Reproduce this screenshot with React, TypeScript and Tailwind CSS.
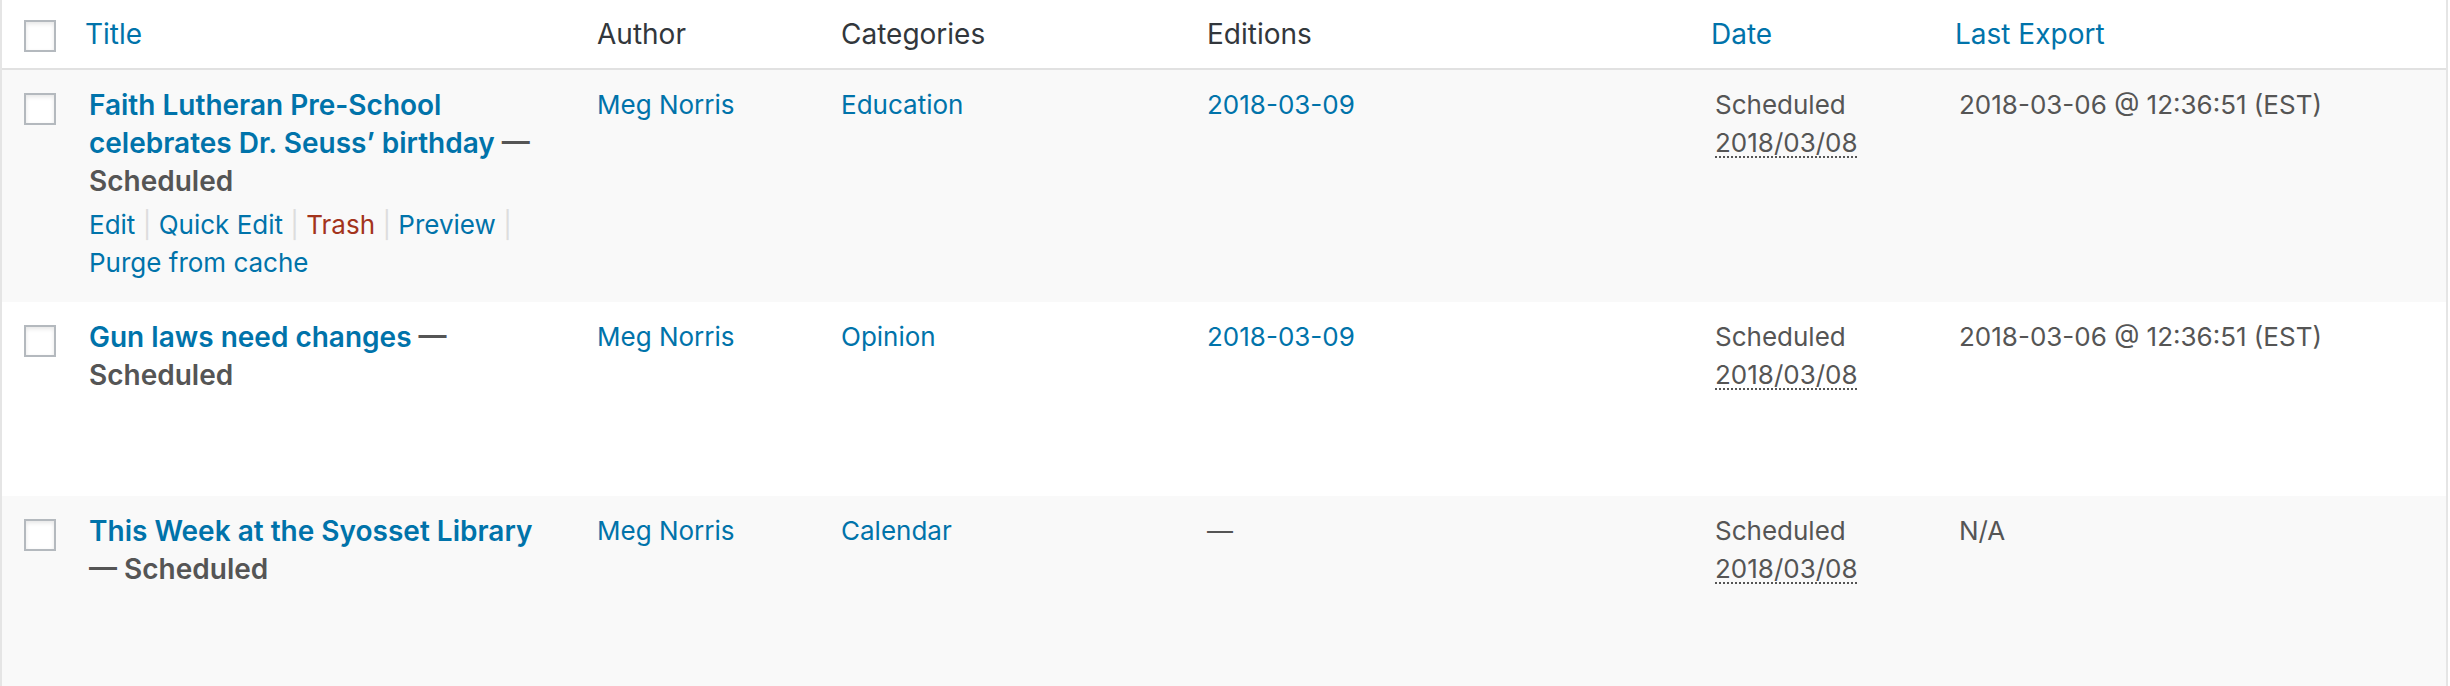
import * as React from "react";

type Post = {
  title: string;
  author: string;
  category: string;
  edition: string;
  date: string;
  lastExport: string;
  showActions?: boolean;
};

const posts: Post[] = [
  {
    title: "Faith Lutheran Pre-School celebrates Dr. Seuss\u2019 birthday",
    author: "Meg Norris",
    category: "Education",
    edition: "2018-03-09",
    date: "2018/03/08",
    lastExport: "2018-03-06 @ 12:36:51 (EST)",
    showActions: true,
  },
  {
    title: "Gun laws need changes",
    author: "Meg Norris",
    category: "Opinion",
    edition: "2018-03-09",
    date: "2018/03/08",
    lastExport: "2018-03-06 @ 12:36:51 (EST)",
  },
  {
    title: "This Week at the Syosset Library",
    author: "Meg Norris",
    category: "Calendar",
    edition: "",
    date: "2018/03/08",
    lastExport: "N/A",
  },
];

const cols = "grid grid-cols-[67px_508px_244px_366px_508px_244px_507px]";

function Checkbox() {
  return (
    <input
      type="checkbox"
      className="block h-8 w-8 appearance-none border-2 border-[#b4b9be] bg-white shadow-[inset_0_2px_4px_rgba(0,0,0,0.1)]"
    />
  );
}

function Sep() {
  return <span className="text-[#ddd]"> | </span>;
}

function RowActions({ visible }: { visible?: boolean }) {
  return (
    <div
      className={
        "pt-[6px] text-[26px] leading-[38px] text-[#0073aa] " +
        (visible ? "" : "invisible")
      }
    >
      <a>Edit</a>
      <Sep />
      <a>Quick Edit</a>
      <Sep />
      <a className="text-[#a3341c]">Trash</a>
      <Sep />
      <a>Preview</a>
      <Sep />
      <a>Purge from cache</a>
    </div>
  );
}

function Row({ post, striped }: { post: Post; striped: boolean }) {
  return (
    <div className={cols + " " + (striped ? "bg-[#f9f9f9]" : "bg-white")}>
      <div className="pl-[22px] pt-[23px]">
        <Checkbox />
      </div>
      <div className="px-5 pt-4 pb-5">
        <div className="text-[28px] font-semibold leading-[38px]">
          <a className="text-[#0073aa]">{post.title}</a>
          <span className="text-[#555]"> {"\u2014"} Scheduled</span>
        </div>
        <RowActions visible={post.showActions} />
      </div>
      <div className="px-5 pt-4 text-[26px] leading-[38px] text-[#0073aa]">
        <a>{post.author}</a>
      </div>
      <div className="px-5 pt-4 text-[26px] leading-[38px] text-[#0073aa]">
        <a>{post.category}</a>
      </div>
      <div className="px-5 pt-4 text-[26px] leading-[38px] text-[#0073aa]">
        {post.edition ? (
          <a>{post.edition}</a>
        ) : (
          <span className="text-[#555]">{"\u2014"}</span>
        )}
      </div>
      <div className="px-5 pt-4 text-[26px] leading-[38px] text-[#555]">
        Scheduled
        <br />
        <abbr className="underline decoration-dotted decoration-2 underline-offset-4">
          {post.date}
        </abbr>
      </div>
      <div className="px-5 pt-4 text-[26px] leading-[38px] text-[#555]">
        {post.lastExport}
      </div>
    </div>
  );
}

export default function App() {
  return (
    <div className="h-[686px] w-[2450px] overflow-hidden bg-white font-['Inter','Liberation_Sans',sans-serif] antialiased">
      <div className="min-h-[686px] w-[2448px] border-x-2 border-[#e5e5e5]">
        <div className={cols + " h-[70px] border-b-2 border-[#e1e1e1] bg-white text-[28px] leading-[40px]"}>
          <div className="pl-[22px] pt-5">
            <Checkbox />
          </div>
          <div className="px-4 py-[14px] text-[#0073aa]">Title</div>
          <div className="px-5 py-[14px] text-[#32373c]">Author</div>
          <div className="px-5 py-[14px] text-[#32373c]">Categories</div>
          <div className="px-5 py-[14px] text-[#32373c]">Editions</div>
          <div className="px-4 py-[14px] text-[#0073aa]">Date</div>
          <div className="px-4 py-[14px] text-[#0073aa]">Last Export</div>
        </div>
        {posts.map((p, i) => (
          <Row key={p.title} post={p} striped={i % 2 === 0} />
        ))}
      </div>
    </div>
  );
}
